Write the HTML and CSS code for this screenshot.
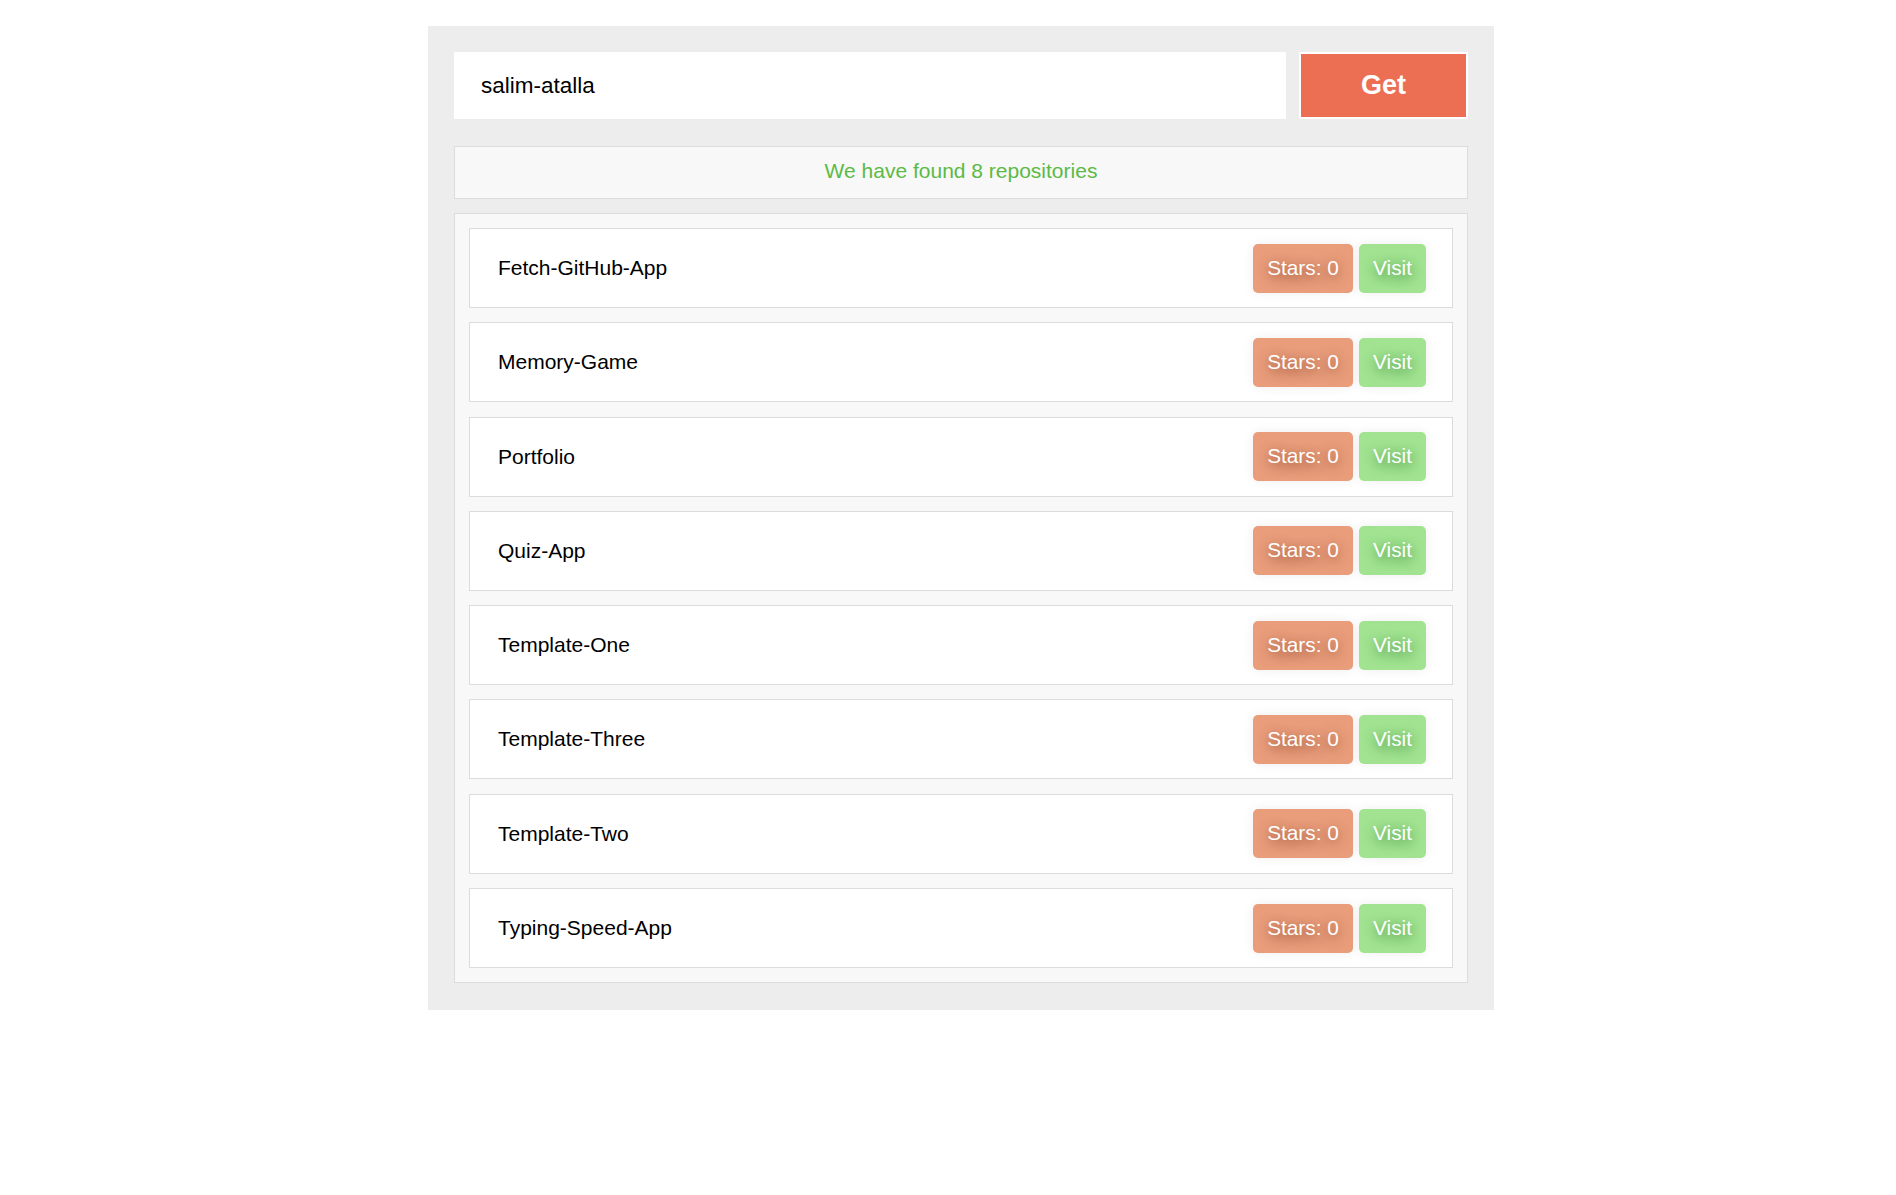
FILE: index.html
```html
<!DOCTYPE html>
<html lang="en">
<head>
<meta charset="utf-8">
<title>Fetch GitHub Repos</title>
<link rel="stylesheet" href="styles.css">
</head>
<body>
<div class="app">
  <div class="search">
    <input class="search-input" type="text" value="salim-atalla">
    <button class="get-btn">Get</button>
  </div>
  <div class="status">We have found 8 repositories</div>
  <div class="repos">
    <div class="repo"><span class="name">Fetch-GitHub-App</span><div class="actions"><span class="stars">Stars: 0</span><a class="visit">Visit</a></div></div>
    <div class="repo"><span class="name">Memory-Game</span><div class="actions"><span class="stars">Stars: 0</span><a class="visit">Visit</a></div></div>
    <div class="repo"><span class="name">Portfolio</span><div class="actions"><span class="stars">Stars: 0</span><a class="visit">Visit</a></div></div>
    <div class="repo"><span class="name">Quiz-App</span><div class="actions"><span class="stars">Stars: 0</span><a class="visit">Visit</a></div></div>
    <div class="repo"><span class="name">Template-One</span><div class="actions"><span class="stars">Stars: 0</span><a class="visit">Visit</a></div></div>
    <div class="repo"><span class="name">Template-Three</span><div class="actions"><span class="stars">Stars: 0</span><a class="visit">Visit</a></div></div>
    <div class="repo"><span class="name">Template-Two</span><div class="actions"><span class="stars">Stars: 0</span><a class="visit">Visit</a></div></div>
    <div class="repo"><span class="name">Typing-Speed-App</span><div class="actions"><span class="stars">Stars: 0</span><a class="visit">Visit</a></div></div>
  </div>
</div>
</body>
</html>
```
FILE: styles.css
```css
* { box-sizing: border-box; }
body {
  margin: 0;
  background: #fff;
  font-family: "Liberation Sans", Arial, sans-serif;
}
.app {
  width: 1066px;
  margin: 26px 0 0 428px;
  padding: 26px 26px 27px;
  background: #ededed;
}
.search {
  display: flex;
  gap: 13px;
  height: 67px;
}
.search-input {
  flex: 1;
  border: none;
  outline: none;
  background: #fff;
  padding: 0 27px;
  font-family: "Liberation Sans", Arial, sans-serif;
  font-size: 22.5px;
  color: #000;
}
.get-btn {
  width: 169px;
  border: 2px solid #fff;
  background: #ed6f53;
  color: #fff;
  font-family: "Liberation Sans", Arial, sans-serif;
  font-weight: bold;
  font-size: 27px;
  padding: 0;
}
.status {
  margin-top: 27px;
  height: 53px;
  border: 1px solid #dcdcdc;
  background: #f8f8f8;
  color: #5cba46;
  font-size: 21px;
  display: flex;
  align-items: center;
  justify-content: center;
  padding-bottom: 4px;
}
.repos {
  margin-top: 14px;
  border: 1px solid #dcdcdc;
  background: #f8f8f8;
  padding: 14px;
  display: flex;
  flex-direction: column;
  gap: 14.3px;
}
.repo {
  height: 80px;
  border: 1px solid #dcdcdc;
  background: #fff;
  padding: 0 26px 0 28px;
  display: flex;
  align-items: center;
  justify-content: space-between;
  font-size: 21px;
  color: #000;
}
.actions {
  display: flex;
  gap: 6px;
}
.stars, .visit {
  display: block;
  height: 49px;
  line-height: 47px;
  padding: 0 13px;
  border-radius: 5px;
  color: #fff;
  font-size: 20.8px;
  text-align: center;
  box-shadow: 0 0 12px rgba(0, 0, 0, 0.07);
}
.stars {
  width: 100px;
  background: #e99d7b;
  text-shadow: 0 3px 12px rgba(120, 50, 25, 0.85);
}
.visit {
  width: 67px;
  background: #a1e391;
  text-shadow: 0 3px 12px rgba(40, 120, 40, 0.85);
}
```
